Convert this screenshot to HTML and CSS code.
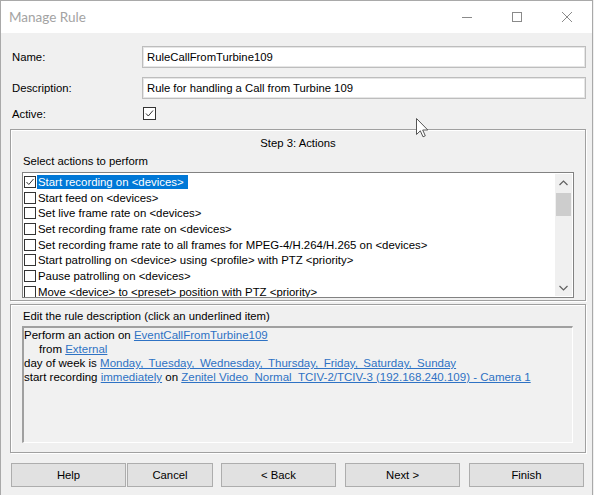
FILE: index.html
```html
<!DOCTYPE html>
<html>
<head>
<meta charset="utf-8">
<title>Manage Rule</title>
<link rel="stylesheet" href="styles.css">
</head>
<body>
<div class="window">
  <div class="titlebar">
    <span class="title">Manage Rule</span>
    <div class="controls">
      <span class="ctl"><svg width="12" height="12" viewBox="0 0 12 12"><path d="M1 6.5H11" stroke="#8a8a8a" stroke-width="1"/></svg></span>
      <span class="ctl"><svg width="12" height="12" viewBox="0 0 12 12"><rect x="1.5" y="1.5" width="9" height="9" fill="none" stroke="#8a8a8a" stroke-width="1"/></svg></span>
      <span class="ctl"><svg width="12" height="12" viewBox="0 0 12 12"><path d="M1 1L11 11M11 1L1 11" stroke="#8a8a8a" stroke-width="1"/></svg></span>
    </div>
  </div>
  <div class="main">
    <div class="field">
      <span class="label">Name:</span>
      <div class="input">RuleCallFromTurbine109</div>
    </div>
    <div class="field field-desc">
      <span class="label">Description:</span>
      <div class="input">Rule for handling a Call from Turbine 109</div>
    </div>
    <div class="field field-active">
      <span class="label">Active:</span>
      <span class="check active-check"><svg width="11" height="11" viewBox="0 0 11 11"><path d="M2 5.5L4.3 8L9 2.5" fill="none" stroke="#333" stroke-width="1"/></svg></span>
    </div>

    <div class="group group-actions">
      <div class="group-title">Step 3: Actions</div>
      <div class="caption">Select actions to perform</div>
      <div class="listbox">
        <div class="items">
          <div class="row"><span class="check"><svg width="10" height="10" viewBox="0 0 10 10"><path d="M1.5 5L3.8 7.5L8.5 2" fill="none" stroke="#333" stroke-width="1"/></svg></span><span class="item selected">Start recording on &lt;devices&gt;</span></div>
          <div class="row"><span class="check"></span><span class="item">Start feed on &lt;devices&gt;</span></div>
          <div class="row"><span class="check"></span><span class="item">Set live frame rate on &lt;devices&gt;</span></div>
          <div class="row"><span class="check"></span><span class="item">Set recording frame rate on &lt;devices&gt;</span></div>
          <div class="row"><span class="check"></span><span class="item">Set recording frame rate to all frames for MPEG-4/H.264/H.265 on &lt;devices&gt;</span></div>
          <div class="row"><span class="check"></span><span class="item">Start patrolling on &lt;device&gt; using &lt;profile&gt; with PTZ &lt;priority&gt;</span></div>
          <div class="row"><span class="check"></span><span class="item">Pause patrolling on &lt;devices&gt;</span></div>
          <div class="row"><span class="check"></span><span class="item">Move &lt;device&gt; to &lt;preset&gt; position with PTZ &lt;priority&gt;</span></div>
        </div>
        <div class="scrollbar">
          <div class="arrow"><svg width="9" height="6" viewBox="0 0 9 6"><path d="M0.5 5L4.5 1L8.5 5" fill="none" stroke="#606060" stroke-width="1.2"/></svg></div>
          <div class="thumb"></div>
          <div class="track"></div>
          <div class="arrow"><svg width="9" height="6" viewBox="0 0 9 6"><path d="M0.5 1L4.5 5L8.5 1" fill="none" stroke="#606060" stroke-width="1.2"/></svg></div>
        </div>
      </div>
    </div>

    <div class="group group-desc">
      <div class="caption">Edit the rule description (click an underlined item)</div>
      <div class="descbox">
        <div class="line">Perform an action on <a class="link">EventCallFromTurbine109</a></div>
        <div class="line indent">from <a class="link">External</a></div>
        <div class="line">day of week is <a class="link days">Monday, Tuesday, Wednesday, Thursday, Friday, Saturday, Sunday</a></div>
        <div class="line">start recording <a class="link">immediately</a> on <a class="link">Zenitel Video_Normal_TCIV-2/TCIV-3 (192.168.240.109) - Camera 1</a></div>
      </div>
    </div>

    <div class="buttons">
      <div class="pair">
        <span class="btn btn-help">Help</span>
        <span class="btn btn-cancel">Cancel</span>
      </div>
      <span class="btn">&lt; Back</span>
      <span class="btn btn-next">Next &gt;</span>
      <span class="btn btn-next">Finish</span>
    </div>
  </div>
  <svg class="cursor" width="13" height="20" viewBox="0 0 13 20"><path d="M0.5 0.5V16.5L4.3 12.8L7 18.8L9.3 17.8L6.7 12H11.8Z" fill="#fff" stroke="#555" stroke-width="1"/></svg>
</div>
</body>
</html>
```

FILE: styles.css
```css
html, body {
  margin: 0;
  background: #f0f0f0;
}
body {
  font-family: "Liberation Sans", Arial, sans-serif;
  font-size: 11.3px;
  color: #000;
}
.window {
  position: relative;
  width: 593px;
  height: 495px;
  box-sizing: border-box;
  border: 1px solid #a9a9a9;
  border-bottom: none;
  background: #f0f0f0;
  display: flex;
  flex-direction: column;
  overflow: hidden;
}
.titlebar {
  height: 32px;
  flex: none;
  background: #fff;
  display: flex;
  align-items: center;
  padding-left: 8px;
}
.title {
  font-family: Lato, "Noto Sans", sans-serif;
  font-size: 13.5px;
  color: #a3a3a3;
  flex: 1;
  padding-bottom: 1px;
}
.controls {
  display: flex;
  height: 32px;
}
.ctl {
  width: 50px;
  display: flex;
  align-items: center;
  justify-content: center;
}
.main {
  padding: 13px 6px 0 9px;
  display: flex;
  flex-direction: column;
}
.field {
  display: grid;
  grid-template-columns: 132px 1fr;
  align-items: center;
  height: 22px;
}
.field .label {
  padding-left: 2px;
}
.field-desc {
  margin-top: 9px;
}
.field-active {
  margin-top: 8px;
  height: 13px;
}
.input {
  height: 22px;
  box-sizing: border-box;
  border: 1px solid #bdbdbd;
  box-shadow: inset 0 0 0 1px #e6e6e6;
  background: #fff;
  padding-left: 4px;
  line-height: 20px;
  white-space: nowrap;
}
.check {
  width: 12px;
  height: 12px;
  box-sizing: border-box;
  border: 1px solid #333;
  background: #fff;
  display: flex;
  align-items: center;
  justify-content: center;
  flex: none;
}
.active-check {
  width: 13px;
  height: 13px;
  margin-left: 1px;
}
.group {
  border: 1px solid #a0a0a0;
  box-shadow: inset 1px 1px 0 #fff, 1px 1px 0 #fff;
  padding: 6px 11px 2px 11px;
}
.group-actions {
  margin-top: 9px;
  height: 172px;
  box-sizing: border-box;
}
.group-title {
  text-align: center;
  line-height: 14px;
}
.caption {
  line-height: 14px;
  padding-left: 1px;
}
.group-actions .caption {
  margin-top: 4px;
  margin-bottom: 4px;
}
.listbox {
  height: 126px;
  box-sizing: border-box;
  border: 1px solid #828282;
  background: #fff;
  display: flex;
}
.items {
  flex: 1;
  overflow: hidden;
  padding-top: 1px;
  padding-left: 1px;
}
.row {
  height: 15.7px;
  display: flex;
  align-items: center;
  white-space: nowrap;
}
.item {
  margin-left: 1px;
  padding: 0 4px 0 1px;
  line-height: 14px;
  font-size: 11.4px;
}
.item.selected {
  background: #0078d7;
  color: #fff;
}
.scrollbar {
  width: 17px;
  background: #f0f0f0;
  display: flex;
  flex-direction: column;
  flex: none;
  margin: 1px 1px 1px 0;
}
.arrow {
  height: 17px;
  display: flex;
  align-items: center;
  justify-content: center;
}
.thumb {
  height: 23px;
  margin: 2px 1px 0 1px;
  background: #cdcdcd;
}
.track {
  flex: 1;
}
.group-desc {
  margin-top: 3px;
  height: 149px;
  box-sizing: border-box;
  padding: 4px 11px 9px 11px;
}
.descbox {
  margin-top: 3px;
  height: 117px;
  box-sizing: border-box;
  border-top: 2px solid #a0a0a0;
  border-left: 2px solid #a0a0a0;
  border-right: 1px solid #fff;
  border-bottom: 1px solid #fff;
  background: #f1f1f1;
  margin-right: 1px;
  font-size: 11.5px;
}
.line {
  line-height: 14px;
  white-space: nowrap;
}
.indent {
  padding-left: 15px;
}
.link {
  color: #2e72c4;
  text-decoration: underline;
}
.days {
  word-spacing: 2.2px;
}
.buttons {
  margin-top: 10px;
  display: flex;
  gap: 8px;
  padding-left: 1px;
}
.pair {
  display: flex;
  gap: 1px;
}
.btn {
  height: 24px;
  width: 115px;
  box-sizing: border-box;
  border: 1px solid #adadad;
  background: #e1e1e1;
  display: flex;
  align-items: center;
  justify-content: center;
}
.btn-cancel {
  width: 86px;
}
.btn-next {
  margin-left: 1px;
}
.cursor {
  position: absolute;
  left: 415px;
  top: 117px;
}
```
